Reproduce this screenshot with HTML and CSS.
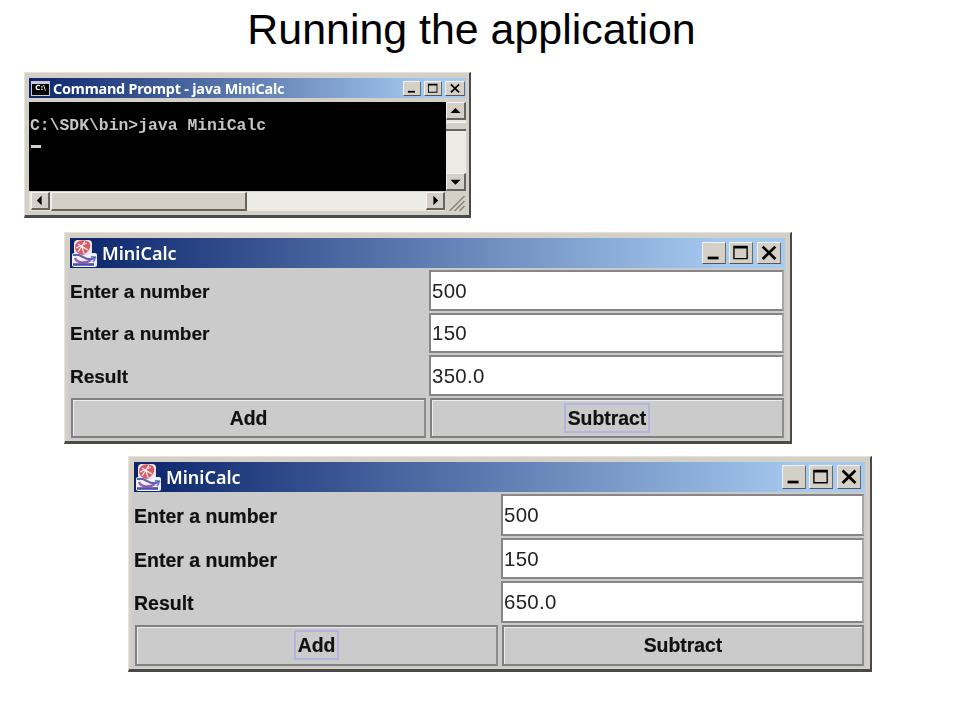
FILE: index.html
```html
<!DOCTYPE html>
<html lang="en">
<head>
<meta charset="utf-8">
<title>Running the application</title>
<link rel="stylesheet" href="styles.css">
</head>
<body>
<svg class="defs" width="0" height="0" aria-hidden="true">
  <symbol id="duke" viewBox="0 0 26 27">
    <rect x="2" y="0" width="18" height="15" rx="4" fill="#f4e6ea"/>
    <rect x="0" y="13" width="25" height="14" rx="2" fill="#eef0fa"/>
    <path d="M7 1c4-1.500 10-1 11 3s-1 6-3 8l-3 3c-3 0-6-1-8-4s-1-8 3-10z" fill="#d85a66"/>
    <path d="M6 4l10 6M13 1l-7 11M4 8l11-5M10 6l2 8" stroke="#f7eef0" stroke-width="1.300" fill="none"/>
    <path d="M1 15h6l8 4h5l4-2" stroke="#5a62b4" stroke-width="2" fill="none"/>
    <path d="M3 18c2 5 10 6 16 2" stroke="#9c5aa8" stroke-width="2.400" fill="none"/>
    <path d="M1 24.500h21" stroke="#4c54ac" stroke-width="2.600"/>
    <path d="M19 17c4-1 5 2 2 5" stroke="#6a70c0" stroke-width="1.600" fill="none"/>
  </symbol>
  <symbol id="i-min" viewBox="0 0 24 22"><rect x="5" y="15" width="12" height="3" fill="#000"/></symbol>
  <symbol id="i-max" viewBox="0 0 24 22"><path d="M3.500 3h16v15h-16z M5 6v10.500h13V6z" fill="#000" fill-rule="evenodd"/></symbol>
  <symbol id="i-close" viewBox="0 0 24 22"><path d="M5 4l14 13.500M19 4L5 17.500" stroke="#000" stroke-width="3" fill="none"/></symbol>
</svg>

<h1 class="heading">Running the application</h1>

<section class="win console">
  <header class="titlebar">
    <span class="cmd-icon">C:\</span>
    <span class="title-text">Command Prompt - java MiniCalc</span>
    <span class="controls">
      <span class="ctl"><svg><use href="#i-min"/></svg></span>
      <span class="ctl"><svg><use href="#i-max"/></svg></span>
      <span class="ctl ctl-close"><svg><use href="#i-close"/></svg></span>
    </span>
  </header>
  <div class="console-main">
    <div class="terminal">
      <div class="term-line">C:\SDK\bin&gt;java MiniCalc</div>
      <div class="term-cursor"></div>
    </div>
    <div class="vscroll">
      <span class="sb-btn"><svg viewBox="0 0 20 18"><path d="M10 6l6 6H4z"/></svg></span>
      <span class="vthumb"></span>
      <span class="track"></span>
      <span class="sb-btn"><svg viewBox="0 0 20 18"><path d="M4 7h12l-6 6z"/></svg></span>
    </div>
  </div>
  <div class="hscroll">
    <span class="sb-btn"><svg viewBox="0 0 20 18"><path d="M12 3v12L6 9z"/></svg></span>
    <span class="hthumb"></span>
    <span class="track"></span>
    <span class="sb-btn"><svg viewBox="0 0 20 18"><path d="M8 3v12l6-6z"/></svg></span>
    <span class="grip"><svg viewBox="0 0 20 19"><path d="M19 4L4 19M19 9L9 19M19 14l-5 5" stroke="#8a8a84" stroke-width="1.600" fill="none"/></svg></span>
  </div>
</section>

<section class="win calc calc-a">
  <header class="titlebar">
    <svg class="duke"><use href="#duke"/></svg>
    <span class="title-text">MiniCalc</span>
    <span class="controls">
      <span class="ctl"><svg><use href="#i-min"/></svg></span>
      <span class="ctl"><svg><use href="#i-max"/></svg></span>
      <span class="ctl ctl-close"><svg><use href="#i-close"/></svg></span>
    </span>
  </header>
  <div class="form">
    <div class="label">Enter a number</div><div class="field">500</div>
    <div class="label">Enter a number</div><div class="field">150</div>
    <div class="label">Result</div><div class="field">350.0</div>
    <div class="btn"><span>Add</span></div>
    <div class="btn"><span class="focus">Subtract</span></div>
  </div>
</section>

<section class="win calc calc-b">
  <header class="titlebar">
    <svg class="duke"><use href="#duke"/></svg>
    <span class="title-text">MiniCalc</span>
    <span class="controls">
      <span class="ctl"><svg><use href="#i-min"/></svg></span>
      <span class="ctl"><svg><use href="#i-max"/></svg></span>
      <span class="ctl ctl-close"><svg><use href="#i-close"/></svg></span>
    </span>
  </header>
  <div class="form">
    <div class="label">Enter a number</div><div class="field">500</div>
    <div class="label">Enter a number</div><div class="field">150</div>
    <div class="label">Result</div><div class="field">650.0</div>
    <div class="btn"><span class="focus">Add</span></div>
    <div class="btn"><span>Subtract</span></div>
  </div>
</section>
</body>
</html>
```
FILE: styles.css
```css
* { box-sizing: border-box; }
html, body { margin: 0; padding: 0; background: #fff; }
body { width: 960px; height: 720px; overflow: hidden; font-family: "Liberation Sans", Arial, sans-serif; }
.defs { position: absolute; }

.heading {
  margin: 0;
  width: 943px;
  height: 72px;
  padding-top: 6px;
  text-align: center;
  font-size: 42.9px;
  line-height: 46px;
  font-weight: 400;
  color: #000;
}

.win {
  display: flex;
  flex-direction: column;
  background: #d4d0c8;
  border-style: solid;
  border-width: 1px 2px 3px 1px;
  border-color: #e6e3dc #4a4a48 #4a4a48 #e6e3dc;
  filter: blur(0.55px);
}

.titlebar {
  display: flex;
  align-items: center;
  background: linear-gradient(90deg, #0a246a 0%, #a6caf0 92%, #a6caf0 100%);
  color: #fff;
  flex: none;
}
.title-text { font-family: "Noto Sans", sans-serif; font-weight: 700; white-space: nowrap; }
.controls { display: flex; margin-left: auto; }
.ctl {
  display: block;
  background: #d4d0c8;
  border-style: solid;
  border-width: 1px;
  border-color: #f4f2ee #6a6a66 #555 #f4f2ee;
}
.ctl svg { display: block; width: 100%; height: 100%; }

/* Console window */
.console {
  width: 447px;
  height: 146px;
  margin-left: 24px;
  padding: 5px 3px 3px 4px;
}
.console .titlebar { height: 20px; padding-left: 2px; padding-right: 1px; }
.console .title-text { font-size: 14.4px; margin-left: 3px; letter-spacing: -0.2px; }
.console .ctl { width: 18px; height: 15px; margin-left: 3px; }
.console .ctl-close { margin-left: 3px; width: 20px; }
.cmd-icon {
  width: 19px;
  height: 15px;
  background: #000;
  border: 1px solid #c8c8d8;
  border-top-width: 3px;
  font: 700 7px/9px "DejaVu Sans", sans-serif;
  color: #fff;
  text-align: center;
  overflow: hidden;
}
.console-main { display: flex; margin-top: 4px; height: 89px; flex: none; }
.terminal { flex: 1; background: #000; padding: 14px 0 0 1px; }
.term-line {
  font: 700 16.4px/20px "Liberation Mono", monospace;
  color: #c4c4c4;
  white-space: pre;
}
.term-cursor { width: 10px; height: 3px; margin-top: 9px; margin-left: 1px; background: #d0d0d0; }
.vscroll { width: 20px; display: flex; flex-direction: column; background: #e9e6e0; }
.sb-btn {
  display: block;
  flex: none;
  width: 19px;
  height: 18px;
  background: #d4d0c8;
  border-style: solid;
  border-width: 1px 2px 2px 1px;
  border-color: #f6f4f0 #66645e #66645e #f6f4f0;
}
.sb-btn svg { display: block; width: 100%; height: 100%; fill: #000; }
.vscroll .sb-btn { width: 20px; }
.vthumb { flex: none; height: 9px; margin-top: 2px; background: #d4d0c8; border-top: 1px solid #f6f4f0; border-bottom: 2px solid #66645e; }
.track { flex: 1; background: #ecebe6; }
.hscroll { display: flex; height: 19px; margin-top: 1px; background: #e9e6e0; flex: none; padding-left: 2px; }
.hthumb {
  flex: none;
  width: 196px;
  margin-left: 1px;
  background: #d4d0c8;
  border-style: solid;
  border-width: 1px 2px 2px 1px;
  border-color: #f6f4f0 #66645e #66645e #f6f4f0;
}
.grip { flex: none; width: 21px; background: #d4d0c8; }
.grip svg { display: block; width: 100%; height: 100%; }

/* MiniCalc windows */
.calc { padding: 5px 5px 2px 5px; }
.calc-a { width: 728px; height: 212px; margin: 14px 0 0 64px; }
.calc-b { width: 744px; height: 216px; margin: 12px 0 0 128px; }
.calc .titlebar { height: 30px; }
.calc .title-text { font-size: 18px; font-weight: 600; margin-left: 4px; }
.duke { width: 26px; height: 27px; margin-left: 2px; flex: none; }
.calc .ctl { width: 24px; height: 22px; margin-left: 3px; }
.calc .ctl-close { margin-left: 4px; }
.calc .controls { padding-right: 4px; }
.calc-b .ctl { height: 24px; }

.form {
  flex: 1;
  display: grid;
  gap: 2px 3px;
  margin: 0 -1px 0 -2px;
  padding: 2px 3px 2px 2px;
  background: #cbcbcb;
}
.calc-a .form { grid-template-columns: 356px 355px; grid-template-rows: repeat(4, 40.5px); }
.calc-b .form { grid-template-columns: 364px 363px; grid-template-rows: repeat(4, 41.5px); }
.label { display: flex; align-items: center; padding-top: 3px; font-size: 19px; font-weight: 700; color: #111; white-space: nowrap; -webkit-text-stroke: 0.2px #111; }
.calc-b .label { font-size: 19.5px; padding-top: 4px; }
.field {
  display: flex;
  align-items: center;
  padding: 2px 0 0 1px;
  background: #fff;
  border-style: solid;
  border-width: 2px;
  border-color: #868686 #a8a8a8 #868686 #868686;
  font-size: 20.4px;
  letter-spacing: 0.3px;
  color: #222;
}
.btn {
  display: flex;
  align-items: center;
  justify-content: center;
  margin-left: 1px;
  background: #cbcbcb;
  border-style: solid;
  border-width: 2px;
  border-color: #808080 #8c8c8c #808080 #808080;
  box-shadow: inset 1px 1px 0 #ececec;
  font-size: 19.4px;
  font-weight: 700;
  color: #111;
  -webkit-text-stroke: 0.2px #111;
}
.btn span { padding: 2px 2px; border: 2px solid transparent; line-height: 22px; }
.btn .focus { border-color: #b4b4de; }
```
